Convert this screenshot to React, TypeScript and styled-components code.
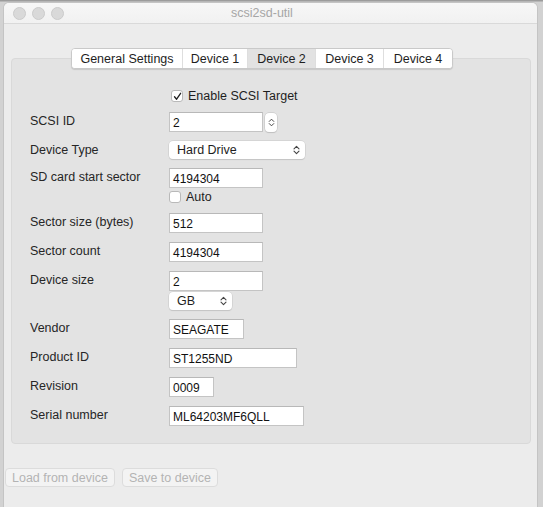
import React from "react";
import styled, { createGlobalStyle } from "styled-components";

const Global = createGlobalStyle`
  html, body { margin: 0; padding: 0; }
  body {
    background: #cdcdcd;
    font-family: "Liberation Sans", Arial, sans-serif;
    font-size: 12px;
    color: #262626;
    overflow: hidden;
  }
`;

const Screen = styled.div`
  width: 543px;
  height: 507px;
  padding-top: 3px;
  box-sizing: border-box;
  background: linear-gradient(#9c9c9c 0, #9c9c9c 1px, #d2d2d2 2px, #d2d2d2 100%);
`;

const Window = styled.div`
  margin-left: 4px;
  width: 533px;
  height: 504px;
  background: #ececec;
  border-radius: 5px 5px 0 0;
  box-shadow: 0 0 0 1px #c4c4c4;
  display: flex;
  flex-direction: column;
`;

const TitleBar = styled.div`
  height: 20px;
  flex: none;
  display: grid;
  grid-template-columns: 1fr auto 1fr;
  align-items: center;
  padding-right: 17px;
  background: linear-gradient(#f7f7f7, #f1f1f1);
  border-bottom: 1px solid #d9d9d9;
  border-radius: 5px 5px 0 0;
`;

const Lights = styled.div`
  display: flex;
  gap: 6px;
  padding-left: 9px;
`;

const Light = styled.span`
  width: 11px;
  height: 11px;
  border-radius: 50%;
  background: #d9d9d9;
  border: 0.5px solid #cbcbcb;
`;

const Title = styled.div`
  color: #a6a6a6;
  font-size: 12.5px;
`;

const Tabs = styled.div`
  margin-top: 24px;
  margin-left: 67px;
  align-self: flex-start;
  position: relative;
  z-index: 1;
  display: flex;
  height: 19px;
  background: #fff;
  border: 1px solid #c9c9c9;
  border-radius: 4px;
  box-shadow: 0 1px 1px rgba(0, 0, 0, 0.12);
  overflow: hidden;
`;

const Tab = styled.div<{ $active?: boolean; $w: number }>`
  width: ${(p) => p.$w}px;
  display: flex;
  align-items: center;
  justify-content: center;
  font-size: 12.5px;
  color: #1e1e1e;
  background: ${(p) => (p.$active ? "#e2e2e2" : "#fff")};
  & + & {
    border-left: 1px solid #dedede;
  }
`;

const Panel = styled.div`
  margin: -11px 6px 0 7px;
  height: 386px;
  box-sizing: border-box;
  background: #e3e3e3;
  border: 1px solid #d9d9d9;
  border-radius: 4px;
  padding: 30px 0 0 18px;
  display: flex;
  flex-direction: column;
  gap: 9px;
`;

const Row = styled.div`
  display: flex;
  align-items: flex-start;
`;

const Label = styled.div`
  width: 139px;
  flex: none;
  line-height: 18px;
  font-size: 12.5px;
`;

const Fields = styled.div<{ $gap?: number }>`
  display: flex;
  flex-direction: column;
  align-items: flex-start;
  gap: ${(p) => p.$gap ?? 1}px;
`;

const Inline = styled.div`
  display: flex;
  align-items: center;
  gap: 2px;
`;

const Input = styled.div<{ $w: number }>`
  width: ${(p) => p.$w}px;
  height: 20px;
  box-sizing: border-box;
  background: #fff;
  border: 1px solid #c4c4c4;
  border-top-color: #b8b8b8;
  padding: 0 3px;
  display: flex;
  align-items: center;
  padding-top: 2px;
  font-size: 12px;
  color: #111;
`;

const Select = styled.div<{ $w: number }>`
  width: ${(p) => p.$w}px;
  height: 18px;
  box-sizing: border-box;
  background: #fff;
  border-radius: 4px;
  box-shadow: 0 0 0 0.5px #c8c8c8, 0 1px 1px rgba(0, 0, 0, 0.15);
  display: flex;
  align-items: center;
  justify-content: space-between;
  padding: 0 5px 0 8px;
  font-size: 12.5px;
  color: #1e1e1e;
`;

const Stepper = styled.div`
  width: 12px;
  height: 19px;
  box-sizing: border-box;
  background: #fff;
  border-radius: 4px;
  box-shadow: 0 0 0 0.5px #c0c0c0, 0 1px 1px rgba(0, 0, 0, 0.15);
  display: flex;
  align-items: center;
  justify-content: center;
`;

const CheckRow = styled.label`
  display: flex;
  align-items: center;
  gap: 5px;
  font-size: 12.5px;
  color: #1e1e1e;
`;

const Box = styled.span`
  width: 12px;
  height: 12px;
  box-sizing: border-box;
  background: #fff;
  border: 1px solid #b9b9b9;
  border-radius: 3px;
  display: flex;
  align-items: center;
  justify-content: center;
`;

const CheckIndent = styled.div`
  padding-left: 141px;
`;

const Buttons = styled.div`
  display: flex;
  gap: 7px;
  margin: 24px 0 0 1px;
`;

const Button = styled.div`
  height: 19px;
  box-sizing: border-box;
  padding: 0 6px;
  display: flex;
  align-items: center;
  background: #f3f3f3;
  border: 1px solid #dcdcdc;
  border-radius: 4px;
  color: #b3b3b3;
  font-size: 12.5px;
`;

const Chevrons = ({ h = 10 }: { h?: number }) => (
  <svg width="7" height={h} viewBox="0 0 7 10" fill="none" stroke="#444" strokeWidth="1.1" strokeLinecap="round" strokeLinejoin="round">
    <path d="M1 3.8 L3.5 1.3 L6 3.8" />
    <path d="M1 6.2 L3.5 8.7 L6 6.2" />
  </svg>
);

const Check = () => (
  <svg width="9" height="9" viewBox="0 0 9 9" fill="none" stroke="#222" strokeWidth="1.3" strokeLinecap="round" strokeLinejoin="round">
    <path d="M1.5 4.8 L3.6 7.2 L7.6 1.3" />
  </svg>
);

const tabs: [string, number][] = [
  ["General Settings", 110],
  ["Device 1", 64],
  ["Device 2", 67],
  ["Device 3", 67],
  ["Device 4", 68],
];

export default function App() {
  return (
    <>
      <Global />
      <Screen>
        <Window>
          <TitleBar>
            <Lights>
              <Light />
              <Light />
              <Light />
            </Lights>
            <Title>scsi2sd-util</Title>
            <div />
          </TitleBar>
          <Tabs>
            {tabs.map(([t, w]) => (
              <Tab key={t} $w={w} $active={t === "Device 2"}>
                {t}
              </Tab>
            ))}
          </Tabs>
          <Panel>
            <CheckIndent>
              <CheckRow>
                <Box>
                  <Check />
                </Box>
                Enable SCSI Target
              </CheckRow>
            </CheckIndent>
            <Row>
              <Label>SCSI ID</Label>
              <Inline>
                <Input $w={94}>2</Input>
                <Stepper>
                  <Chevrons h={9} />
                </Stepper>
              </Inline>
            </Row>
            <Row>
              <Label>Device Type</Label>
              <Select $w={136}>
                Hard Drive
                <Chevrons />
              </Select>
            </Row>
            <Row>
              <Label>SD card start sector</Label>
              <Fields $gap={2}>
                <Input $w={94}>4194304</Input>
                <CheckRow>
                  <Box />
                  Auto
                </CheckRow>
              </Fields>
            </Row>
            <Row>
              <Label>Sector size (bytes)</Label>
              <Input $w={94}>512</Input>
            </Row>
            <Row>
              <Label>Sector count</Label>
              <Input $w={94}>4194304</Input>
            </Row>
            <Row>
              <Label>Device size</Label>
              <Fields $gap={1}>
                <Input $w={94}>2</Input>
                <Select $w={63}>
                  GB
                  <Chevrons />
                </Select>
              </Fields>
            </Row>
            <Row>
              <Label>Vendor</Label>
              <Input $w={75}>SEAGATE</Input>
            </Row>
            <Row>
              <Label>Product ID</Label>
              <Input $w={128}>ST1255ND</Input>
            </Row>
            <Row>
              <Label>Revision</Label>
              <Input $w={45}>0009</Input>
            </Row>
            <Row>
              <Label>Serial number</Label>
              <Input $w={135}>ML64203MF6QLL</Input>
            </Row>
          </Panel>
          <Buttons>
            <Button>Load from device</Button>
            <Button>Save to device</Button>
          </Buttons>
        </Window>
      </Screen>
    </>
  );
}
